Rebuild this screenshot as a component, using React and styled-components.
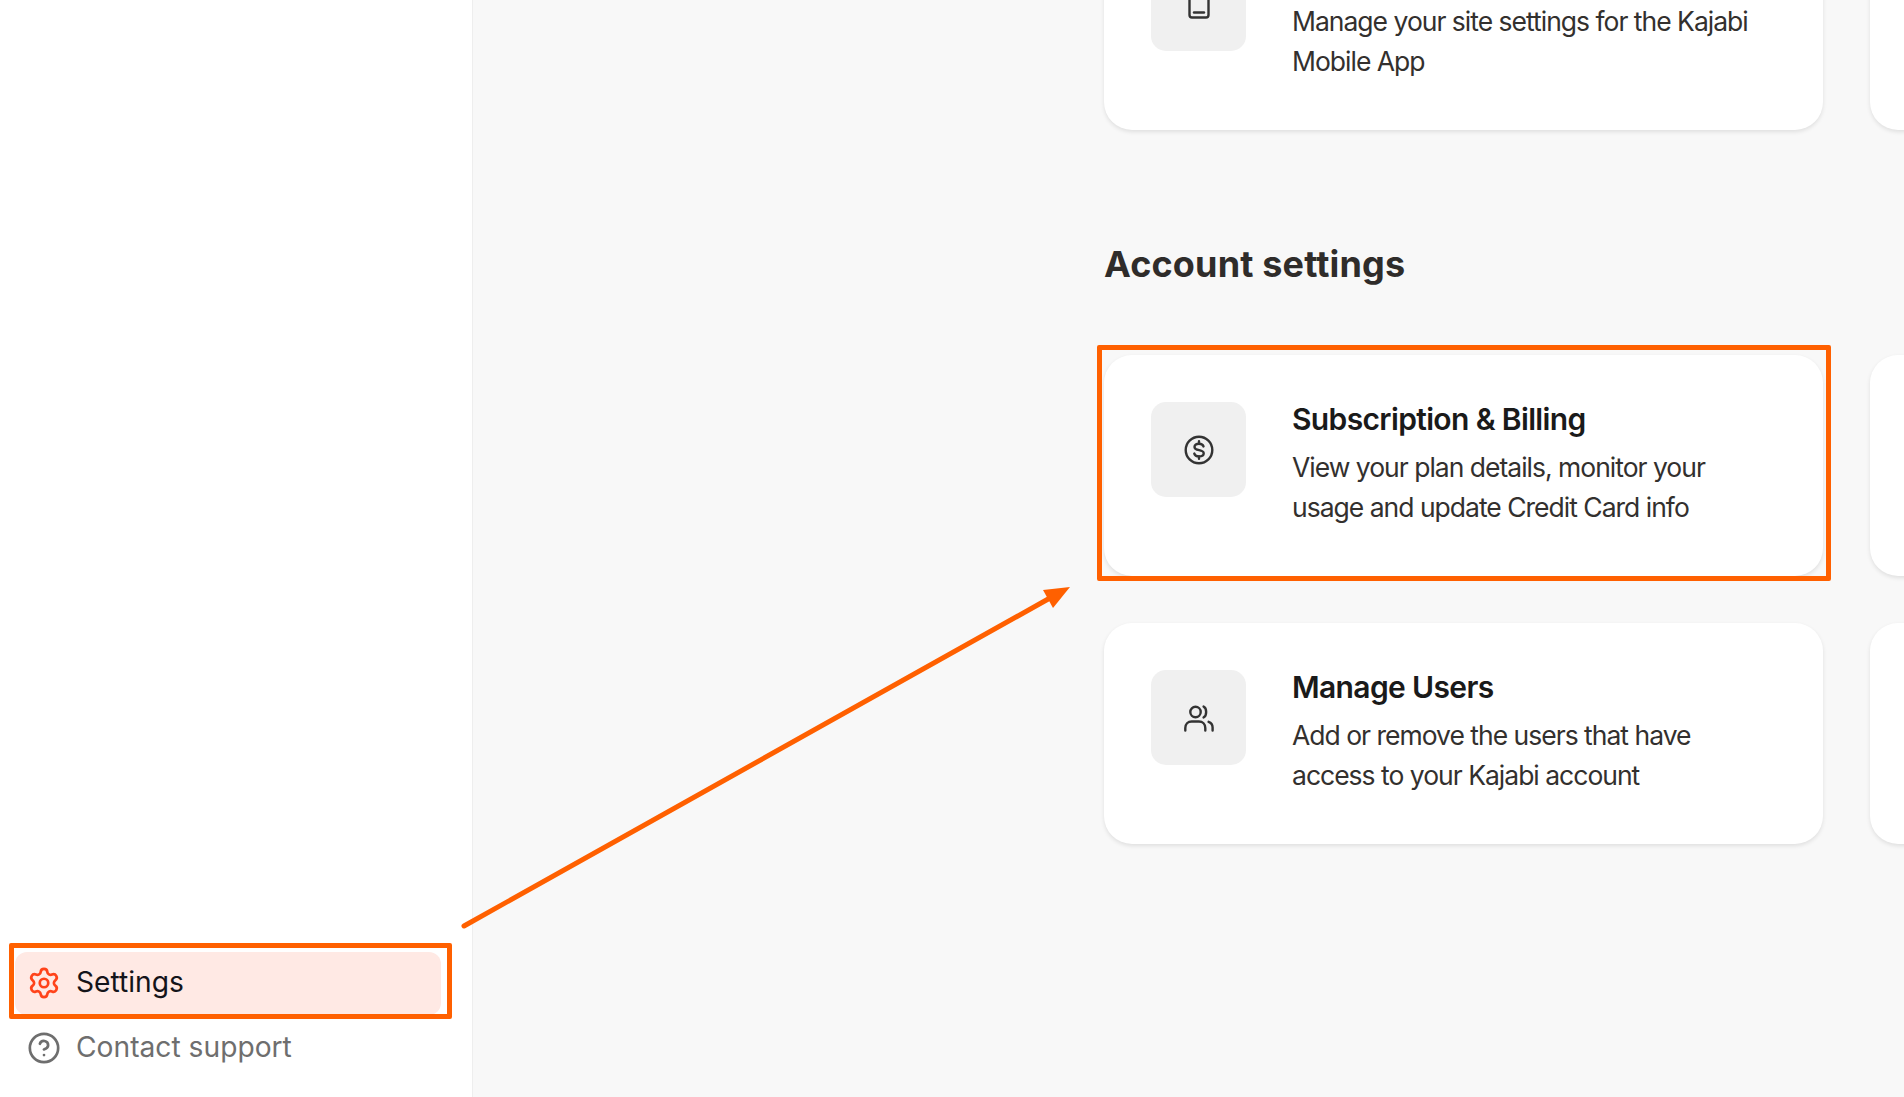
import React from "react";
import styled, { createGlobalStyle } from "styled-components";
import { Settings, CircleHelp } from "lucide-react";

const Global = createGlobalStyle`
  html, body { margin: 0; padding: 0; height: 100%; background: #f8f8f8; }
  #root { height: 100%; }
  * { box-sizing: border-box; }
`;

const Page = styled.div`
  position: relative;
  display: flex;
  width: 100%;
  height: 100vh;
  overflow: hidden;
  background: #f8f8f8;
`;

const Sidebar = styled.aside`
  flex: 0 0 473px;
  display: flex;
  flex-direction: column;
  justify-content: flex-end;
  gap: 2px;
  padding: 0 31px 17px 15px;
  background: #fff;
  border-right: 1px solid #eeeeee;
`;

const NavItem = styled.div`
  display: flex;
  align-items: center;
  gap: 15px;
  height: 63px;
  padding: 0 0 2px 12px;
  border-radius: 12px;
  background: ${(p) => (p.$active ? "#ffe9e4" : "transparent")};
  color: ${(p) => (p.$active ? "#14141a" : "#6e6e6e")};
  font: 400 28.2px/1 Inter, "Liberation Sans", sans-serif;
  svg { color: ${(p) => (p.$active ? "#ff431a" : "#6e6e6e")}; flex: none; }
`;

const Main = styled.main`
  flex: 1;
  min-width: 0;
  display: flex;
  flex-direction: column;
  justify-content: flex-end;
  gap: 112px;
  padding: 0 0 253px 631px;
  overflow: hidden;
`;

const Section = styled.section`
  display: flex;
  flex-direction: column;
  flex: none;
`;

const Heading = styled.h2`
  margin: 0 0 69px;
  color: #2f2c2a;
  font: 700 36px/44px Inter, "Liberation Sans", sans-serif;
  letter-spacing: 0.15px;
`;

const CardGrid = styled.div`
  display: grid;
  grid-template-columns: 719px 719px;
  gap: 47px;
`;

const Card = styled.div`
  display: flex;
  gap: 46px;
  min-height: 221px;
  padding: 47px;
  border-radius: 28px;
  background: #fff;
  box-shadow: 0 2px 4px rgba(0, 0, 0, 0.1);
`;

const IconTile = styled.div`
  flex: none;
  display: flex;
  align-items: center;
  justify-content: center;
  width: 95px;
  height: 95px;
  border-radius: 15px;
  background: #f0f0f0;
  color: #333;
`;

const CardBody = styled.div`
  display: flex;
  flex-direction: column;
  gap: 8px;
  min-width: 0;
  margin-top: -3px;
`;

const CardTitle = styled.h3`
  margin: 0;
  color: #1a1a1a;
  font: 600 30px/40px Inter, "Liberation Sans", sans-serif;
  letter-spacing: -0.64px;
`;

const CardText = styled.p`
  margin: 0;
  color: #33302e;
  font: 400 26.5px/40px Inter, "Liberation Sans", sans-serif;
  letter-spacing: -1px;
`;

const Highlight = styled.div`
  position: absolute;
  left: ${(p) => p.$x}px;
  top: ${(p) => p.$y}px;
  width: ${(p) => p.$w}px;
  height: ${(p) => p.$h}px;
  border: 5px solid #ff6000;
  border-radius: 2px;
  pointer-events: none;
`;

const ArrowLayer = styled.svg`
  position: absolute;
  left: 0;
  top: 0;
  pointer-events: none;
`;

const IconSvg = ({ children }) => (
  <svg width="30" height="30" viewBox="0 0 30 30" fill="none" stroke="currentColor" strokeWidth="2.4" strokeLinecap="round" strokeLinejoin="round">
    {children}
  </svg>
);

const PhoneIcon = () => (
  <IconSvg>
    <rect x="5.5" y="1" width="19" height="27.5" rx="2.5" />
    <path d="M10 23.5h10" />
  </IconSvg>
);

const DollarIcon = () => (
  <IconSvg>
    <circle cx="15" cy="15" r="13.3" />
    <path d="M19.5 11.4c-.5-1.7-2.2-2.7-4.5-2.7-2.6 0-4.5 1.3-4.5 3.2 0 4.4 9.2 2 9.2 6.3 0 1.9-2 3.2-4.7 3.2-2.4 0-4.2-1-4.7-2.8" />
    <path d="M15 6.2v2.4M15 21.4v2.4" />
  </IconSvg>
);

const UsersIcon = () => (
  <IconSvg>
    <circle cx="11.5" cy="9" r="5.2" />
    <path d="M19.6 3.6c3.4 1.5 3.4 9.3 0 10.8" />
    <path d="M1.3 27.5V25c0-3.800 2.600-6.500 6.400-6.500h7.200c3.800 0 6.400 2.700 6.400 6.500v2.500" />
    <path d="M24.6 18.800c2.500.9 4 3 4 5.700v3" />
  </IconSvg>
);

const cards = [
  { title: "Subscription & Billing", text: ["View your plan details, monitor your", "usage and update Credit Card info"], icon: <DollarIcon /> },
  { title: "Manage Users", text: ["Add or remove the users that have", "access to your Kajabi account"], icon: <UsersIcon /> },
];

const SettingCard = ({ title, text, icon }) => (
  <Card>
    <IconTile>{icon}</IconTile>
    <CardBody>
      <CardTitle>{title}</CardTitle>
      <CardText>
        {text[0]}
        <br />
        {text[1]}
      </CardText>
    </CardBody>
  </Card>
);

export default function App() {
  return (
    <Page>
      <Global />
      <Sidebar>
        <NavItem $active>
          <Settings size={34} strokeWidth={1.9} />
          Settings
        </NavItem>
        <NavItem>
          <CircleHelp size={34} strokeWidth={1.9} />
          Contact support
        </NavItem>
      </Sidebar>
      <Main>
        <Section>
          <CardGrid>
            <SettingCard title="Mobile App" text={["Manage your site settings for the Kajabi", "Mobile App"]} icon={<PhoneIcon />} />
            <Card />
          </CardGrid>
        </Section>
        <Section>
          <Heading>Account settings</Heading>
          <CardGrid>
            <SettingCard {...cards[0]} />
            <Card />
            <SettingCard {...cards[1]} />
            <Card />
          </CardGrid>
        </Section>
      </Main>
      <Highlight $x={9} $y={943} $w={443} $h={76} />
      <Highlight $x={1097} $y={345} $w={734} $h={236} />
      <ArrowLayer width="1904" height="1097" viewBox="0 0 1904 1097">
        <path d="M464 926L1050 598" stroke="#ff6000" strokeWidth="5" strokeLinecap="round" fill="none" />
        <path d="M1070 587L1043 590L1053 608Z" fill="#ff6000" />
      </ArrowLayer>
    </Page>
  );
}
